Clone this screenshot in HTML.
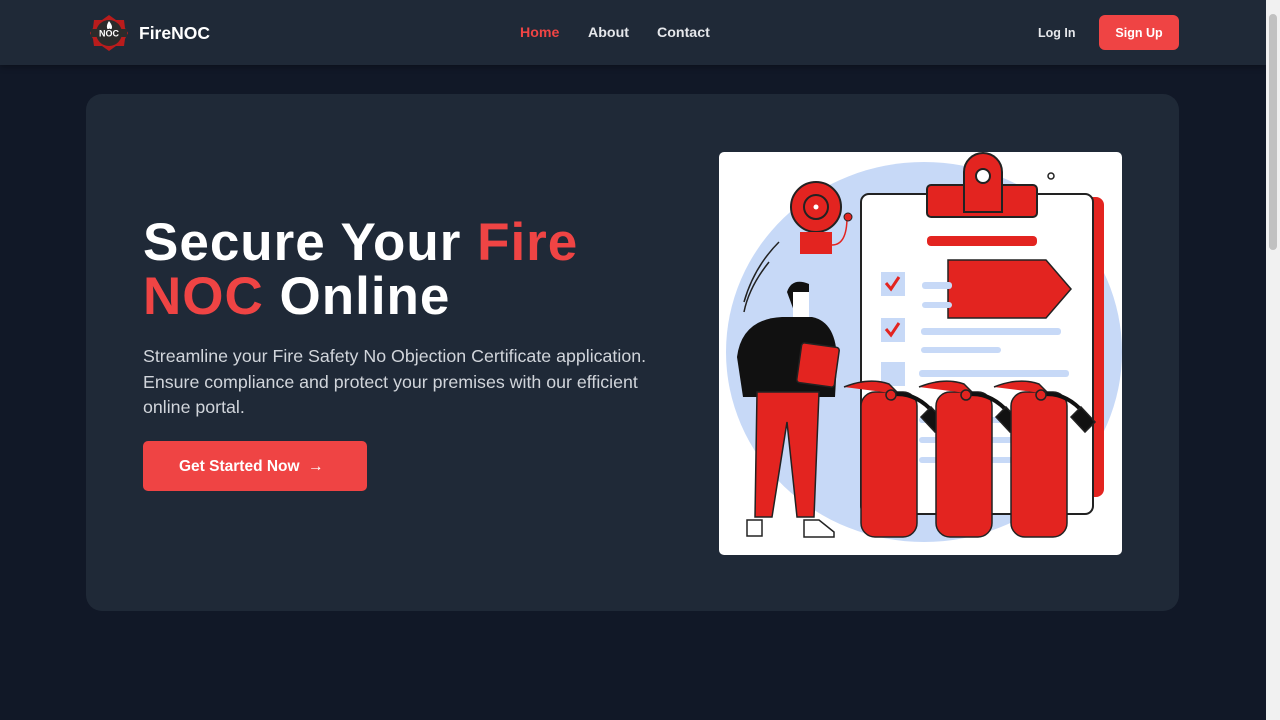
<!DOCTYPE html>
<html><head><meta charset="utf-8"><style>
*{margin:0;padding:0;box-sizing:border-box}
body{width:1280px;height:720px;background:#111827;font-family:"Liberation Sans",sans-serif;overflow:hidden;position:relative}
nav{position:absolute;left:0;top:0;width:1266px;height:65px;background:#1f2937;box-shadow:0 2px 6px rgba(0,0,0,.3)}
.brand{position:absolute;left:139px;top:23px;color:#fff;font-weight:bold;font-size:17.5px}
.links a{position:absolute;top:25px;font-size:14.2px;font-weight:bold;color:#e5e7eb;text-decoration:none}
.login{position:absolute;left:1038px;top:26px;color:#e5e7eb;font-size:12.5px;font-weight:bold}
.signup{position:absolute;left:1099px;top:15px;width:80px;height:35px;background:#ef4444;border-radius:6px;color:#fff;font-size:12.5px;font-weight:bold;text-align:center;line-height:36px}
.card{position:absolute;left:86px;top:94px;width:1093px;height:517px;background:#1f2937;border-radius:16px}
h1{position:absolute;left:143px;top:216px;font-size:53px;line-height:54px;color:#fff;font-weight:900;letter-spacing:1px}
h1 span{color:#ef4444}
p{position:absolute;left:143px;top:344px;width:530px;font-size:17.8px;line-height:25.5px;color:#d1d5db}
.btn{position:absolute;left:143px;top:441px;width:224px;height:50px;background:#ef4444;border-radius:5px;color:#fff;font-weight:bold;font-size:15.5px;line-height:51px;padding-left:36px}
.img{position:absolute;left:719px;top:152px;width:403px;height:403px;background:#fff;border-radius:5px;overflow:hidden}
.sb{position:absolute;right:0;top:0;width:14px;height:720px;background:#f1f1f1}
.sb div{position:absolute;left:3px;top:14px;width:8px;height:236px;background:#c1c1c1;border-radius:4px}
</style></head><body>
<nav>
<svg style="position:absolute;left:89px;top:14px" width="40" height="38" viewBox="0 0 40 38">
<polygon points="20,1 27,6 35,6 36,14 39,19 36,25 35,32 27,32 20,37 13,32 5,32 4,25 1,19 4,14 5,6 13,6" fill="#b91c1c"/>
<circle cx="20" cy="19" r="13" fill="#2b2b2b"/>
<path d="M20 7c3 4 4 6 2 9-1-2-2-2-3 0-2-3-1-6 1-9z" fill="#fff"/>
<rect x="2" y="15" width="36" height="8" fill="#2b2b2b"/>
<text x="20" y="22.5" font-size="9" font-weight="bold" fill="#fff" text-anchor="middle" font-family="Liberation Sans">NOC</text>
</svg>
<div class="brand">FireNOC</div>
<div class="links"><a style="left:520px;color:#ef4444">Home</a><a style="left:588px">About</a><a style="left:657px">Contact</a></div>
<div class="login">Log In</div>
<div class="signup">Sign Up</div>
</nav>
<div class="card"></div>
<h1>Secure Your <span>Fire<br>NOC</span> Online</h1>
<p>Streamline your Fire Safety No Objection Certificate application. Ensure compliance and protect your premises with our efficient online portal.</p>
<div class="btn">Get Started Now &nbsp;→</div>
<div class="img">
<svg width="403" height="403" viewBox="0 0 403 403">
<ellipse cx="205" cy="200" rx="198" ry="190" fill="#c7d9f7"/>
<rect x="350" y="45" width="35" height="300" rx="8" fill="#e32420"/>
<rect x="142" y="42" width="232" height="320" rx="8" fill="#fff" stroke="#222" stroke-width="2"/>
<rect x="208" y="33" width="110" height="32" rx="4" fill="#e32420" stroke="#222" stroke-width="2"/>
<path d="M245 60 v-40 a19 19 0 0 1 38 0 v40z" fill="#e32420" stroke="#222" stroke-width="2"/>
<circle cx="264" cy="24" r="7" fill="#fff" stroke="#222" stroke-width="2"/>
<rect x="208" y="84" width="110" height="10" rx="4" fill="#e32420"/>
<path d="M229 108 h98 l25 29 l-25 29 h-98z" fill="#e32420" stroke="#222" stroke-width="1.5"/>
<rect x="162" y="120" width="24" height="24" fill="#c7d9f7"/><path d="M167 131 l5 6 l8-12" stroke="#e32420" stroke-width="3" fill="none"/>
<rect x="162" y="166" width="24" height="24" fill="#c7d9f7"/><path d="M167 177 l5 6 l8-12" stroke="#e32420" stroke-width="3" fill="none"/>
<rect x="162" y="210" width="24" height="24" fill="#c7d9f7"/>
<g fill="#c7d9f7"><rect x="203" y="130" width="30" height="7" rx="3"/><rect x="203" y="150" width="30" height="6" rx="3"/><rect x="202" y="176" width="140" height="7" rx="3"/><rect x="202" y="195" width="80" height="6" rx="3"/><rect x="200" y="218" width="150" height="7" rx="3"/><rect x="200" y="265" width="100" height="6" rx="3"/><rect x="200" y="285" width="100" height="6" rx="3"/><rect x="200" y="305" width="100" height="6" rx="3"/></g>
<circle cx="97" cy="55" r="25" fill="#e32420" stroke="#222" stroke-width="2"/>
<circle cx="97" cy="55" r="12" fill="none" stroke="#222" stroke-width="2"/><circle cx="97" cy="55" r="2.5" fill="#fff"/>
<rect x="81" y="80" width="32" height="22" fill="#e32420"/>
<path d="M113 93 q15 0 15-28" stroke="#e32420" fill="none" stroke-width="1.5"/><circle cx="129" cy="65" r="4" fill="#e32420" stroke="#222"/>
<path d="M60 90 q-25 25 -35 60 M50 110 q-20 25 -25 50" stroke="#222" fill="none" stroke-width="1.5"/>
<circle cx="332" cy="24" r="3" fill="none" stroke="#222" stroke-width="1.5"/>
<path d="M18 205 q5 -38 45 -40 h30 q25 5 25 45 l-2 35 h-92z" fill="#111"/>
<path d="M68 140 q5 -15 22 -8 v25 l-12 10 z" fill="#111"/>
<rect x="74" y="140" width="16" height="25" fill="#fff"/>
<path d="M38 240 l62 0 l-5 125 h-17 l-10 -95 l-15 95 h-17z" fill="#e32420" stroke="#222" stroke-width="1.5"/>
<rect x="80" y="193" width="38" height="40" rx="3" fill="#e32420" stroke="#222" stroke-width="1.5" transform="rotate(8 99 213)"/>
<path d="M28 368 h15 v16 h-15z M85 368 h15 l15 12 v5 h-30z" fill="#fff" stroke="#222" stroke-width="1.5"/>
<g stroke="#222" stroke-width="1.5">
<g><rect x="142" y="240" width="56" height="145" rx="14" fill="#e32420"/><path d="M125 235 q25 -10 45 -3 l10 10" fill="#e32420"/><path d="M170 243 q25 -5 45 18" stroke="#111" stroke-width="4" fill="none"/><path d="M212 255 l14 15 l-10 10 l-14 -15z" fill="#111"/><circle cx="172" cy="243" r="5" fill="#e32420"/></g>
<g transform="translate(75 0)"><rect x="142" y="240" width="56" height="145" rx="14" fill="#e32420"/><path d="M125 235 q25 -10 45 -3 l10 10" fill="#e32420"/><path d="M170 243 q25 -5 45 18" stroke="#111" stroke-width="4" fill="none"/><path d="M212 255 l14 15 l-10 10 l-14 -15z" fill="#111"/><circle cx="172" cy="243" r="5" fill="#e32420"/></g>
<g transform="translate(150 0)"><rect x="142" y="240" width="56" height="145" rx="14" fill="#e32420"/><path d="M125 235 q25 -10 45 -3 l10 10" fill="#e32420"/><path d="M170 243 q25 -5 45 18" stroke="#111" stroke-width="4" fill="none"/><path d="M212 255 l14 15 l-10 10 l-14 -15z" fill="#111"/><circle cx="172" cy="243" r="5" fill="#e32420"/></g>
</g>
</svg>
</div>
<div class="sb"><div></div></div>
</body></html>
